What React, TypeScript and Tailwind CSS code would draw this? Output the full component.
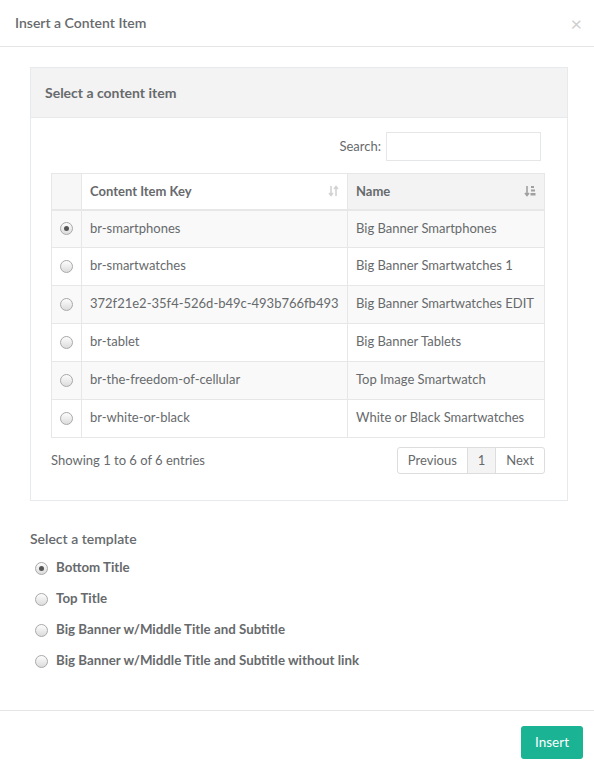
import React, { useState } from 'react';

interface ContentItem {
    key: string;
    name: string;
}

const items: ContentItem[] = [
    { key: 'br-smartphones', name: 'Big Banner Smartphones' },
    { key: 'br-smartwatches', name: 'Big Banner Smartwatches 1' },
    { key: '372f21e2-35f4-526d-b49c-493b766fb493', name: 'Big Banner Smartwatches EDIT' },
    { key: 'br-tablet', name: 'Big Banner Tablets' },
    { key: 'br-the-freedom-of-cellular', name: 'Top Image Smartwatch' },
    { key: 'br-white-or-black', name: 'White or Black Smartwatches' },
];

const templates = [
    'Bottom Title',
    'Top Title',
    'Big Banner w/Middle Title and Subtitle',
    'Big Banner w/Middle Title and Subtitle without link',
];

const Radio: React.FC<{ checked: boolean; onClick: () => void }> = ({ checked, onClick }) => (
    <span
        onClick={onClick}
        className="inline-flex items-center justify-center w-[13px] h-[13px] rounded-full border border-[#a9a9a9] bg-gradient-to-b from-[#fdfdfd] to-[#dcdcdc] cursor-pointer"
    >
        {checked && <span className="w-[5px] h-[5px] rounded-full bg-[#555]" />}
    </span>
);

const SortBoth = () => (
    <svg width="11" height="12" viewBox="0 0 11 12" className="text-[#d3d3d3]">
        <path d="M3 1v9M1 8l2 2.5L5 8" stroke="currentColor" strokeWidth="1.6" fill="none" />
        <path d="M8 11V2M6 4l2-2.5L10 4" stroke="currentColor" strokeWidth="1.6" fill="none" />
    </svg>
);

const SortAlpha = () => (
    <svg width="12" height="12" viewBox="0 0 12 12" className="text-[#a0a0a0]">
        <path d="M3 1v9M1 8l2 2.5L5 8" stroke="currentColor" strokeWidth="1.6" fill="none" />
        <rect x="7" y="1" width="3" height="2" fill="currentColor" />
        <rect x="7" y="4.5" width="4" height="2" fill="currentColor" />
        <rect x="6.5" y="8" width="5" height="2.5" fill="currentColor" />
    </svg>
);

const App: React.FC = () => {
    const [selected, setSelected] = useState(0);
    const [template, setTemplate] = useState(0);

    return (
        <div className="w-[594px] min-h-[766px] bg-white text-[#676a6c] text-[13px] font-['Lato','Open_Sans',sans-serif]">
            <header className="h-[47px] flex items-center justify-between px-[15px] pb-[1px] border-b border-[#e5e5e5]">
                <h4 className="text-[14px] font-semibold text-[#676a6c]">Insert a Content Item</h4>
                <span className="text-[#cfcfcf] text-[20px] leading-none mr-[-3px]">×</span>
            </header>

            <div className="pl-[30px] pr-[26px] pt-[20px] pb-[40px]">
                <div className="border border-[#e7eaec]">
                    <div className="h-[50px] flex items-center px-[14px] pb-[1px] bg-[#f3f3f3] border-b border-[#e7eaec]">
                        <h5 className="text-[14px] font-bold text-[#676a6c]">Select a content item</h5>
                    </div>
                    <div className="pt-[14px] pl-[20px] pr-[22px] pb-[26px]">
                        <div className="flex justify-end items-center gap-[5px] mb-[12px] pr-[4px]">
                            <span>Search:</span>
                            <input className="w-[155px] h-[29px] border border-[#e5e6e7] outline-none px-2" />
                        </div>

                        <table className="w-full border-collapse">
                            <thead>
                                <tr className="h-[36px]">
                                    <th className="w-[30px] border border-[#e7e7e7] border-b-2 bg-[#f7f7f7]" />
                                    <th className="w-[266px] border border-[#e7e7e7] border-b-2 text-left font-bold px-[8px]">
                                        <div className="flex items-center justify-between">
                                            <span>Content Item Key</span>
                                            <SortBoth />
                                        </div>
                                    </th>
                                    <th className="border border-[#e7e7e7] border-b-2 bg-[#f3f3f3] text-left font-bold px-[8px]">
                                        <div className="flex items-center justify-between">
                                            <span>Name</span>
                                            <SortAlpha />
                                        </div>
                                    </th>
                                </tr>
                            </thead>
                            <tbody>
                                {items.map((it, i) => (
                                    <tr key={it.key} className={i % 2 === 0 ? 'h-[38px] bg-[#f9f9f9]' : 'h-[38px] bg-white'}>
                                        <td className="border border-[#e7e7e7] text-center">
                                            <div className="flex justify-center">
                                                <Radio checked={selected === i} onClick={() => setSelected(i)} />
                                            </div>
                                        </td>
                                        <td className="border border-[#e7e7e7] px-[8px] pb-[1px] whitespace-nowrap">{it.key}</td>
                                        <td className="border border-[#e7e7e7] px-[8px] pb-[1px] whitespace-nowrap">{it.name}</td>
                                    </tr>
                                ))}
                            </tbody>
                        </table>

                        <div className="flex justify-between items-center mt-[9px]">
                            <span>Showing 1 to 6 of 6 entries</span>
                            <div className="flex h-[27px] border border-[#ddd] rounded-[3px] overflow-hidden">
                                <span className="px-[10px] flex items-center text-[#676a6c]">Previous</span>
                                <span className="px-[10px] flex items-center bg-[#f4f4f4] border-x border-[#ddd]">1</span>
                                <span className="px-[10px] flex items-center">Next</span>
                            </div>
                        </div>
                    </div>
                </div>

                <div className="mt-[27px]">
                    <label className="block font-semibold mb-[10px] text-[14px]">Select a template</label>
                    <div className="flex flex-col gap-[13px] pl-[5px]">
                        {templates.map((t, i) => (
                            <div key={t} className="flex items-center gap-[8px] h-[18px]">
                                <Radio checked={template === i} onClick={() => setTemplate(i)} />
                                <span className="font-bold text-[13.3px]">{t}</span>
                            </div>
                        ))}
                    </div>
                </div>
            </div>

            <footer className="border-t border-[#e5e5e5] flex justify-end px-[11px] pt-[15px] pb-[7px]">
                <button className="bg-[#1ab394] text-white h-[33px] px-[14px] rounded-[3px] text-[13.5px]">Insert</button>
            </footer>
        </div>
    );
};

export default App;
